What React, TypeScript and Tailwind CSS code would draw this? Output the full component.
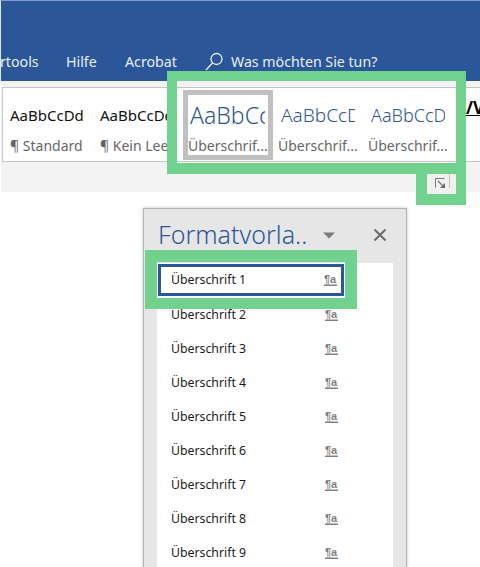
const SANS = "font-['Noto_Sans','Open_Sans',sans-serif]";

function Sample({ text, label, color, size, w, clip, selected }: { text: string; label: string; color: string; size: string; w: string; clip: string; selected?: boolean }) {
  return (
    <div className={`${w} shrink-0 h-[70px] flex flex-col overflow-hidden border-[5px] ${selected ? 'border-[#c0c0c0]' : 'border-transparent'}`}>
      <div className={`h-[41px] mb-[1px] flex items-center whitespace-nowrap overflow-hidden ${clip} ${color} ${size}`}>{text}</div>
      <div className="text-[14px] leading-[18px] text-[#666666] whitespace-nowrap overflow-hidden">{label}</div>
    </div>
  );
}

function Para() {
  return (
    <svg width="14" height="14" viewBox="0 0 14 14" className="shrink-0">
      <text x="0" y="10" fontSize="11" fontWeight="700" fill="#808080" fontFamily="'Liberation Sans', sans-serif">¶a</text>
      <rect x="0" y="11.5" width="13" height="1.5" fill="#808080" />
    </svg>
  );
}

function Row({ n, first }: { n: number; first?: boolean }) {
  return (
    <div className={`shrink-0 flex items-center justify-between text-[12.3px] text-[#1a1a1a] ${first ? 'h-[32px] mb-[2px] border-[3px] border-[#2b579a] pl-[10px] pr-[3px] ml-[1px] mr-[49px]' : 'h-[34px] pl-[14px] pr-[54px]'}`}>
      <span>Überschrift {n}</span>
      <Para />
    </div>
  );
}

export default function App() {
  return (
    <div className={`relative w-[480px] h-[567px] overflow-hidden bg-white ${SANS}`}>
      <div className="h-[81px] bg-[#2b579a] border-t border-l border-t-[#7f9bc4] border-l-[#dfe5ef] flex items-end pb-[9px] text-[14.2px] text-[#e8edf5] leading-[20px] whitespace-nowrap overflow-hidden">
        <span className="-ml-[1px] w-[66px] shrink-0">rtools</span>
        <span className="w-[59px] shrink-0">Hilfe</span>
        <span className="w-[80px] shrink-0">Acrobat</span>
        <svg width="18" height="20" viewBox="0 0 18 20" fill="none" stroke="#e8edf5" strokeWidth="1.3" className="mr-[8px] shrink-0">
          <circle cx="11.5" cy="7" r="5.5" />
          <path d="M7.5 11 L1 18" />
        </svg>
        <span>Was möchten Sie tun?</span>
      </div>
      <div className="h-[111px] bg-[#f3f3f3] pt-[6px] pl-[1px] border-l border-[#ffffff]">
        <div className="w-[478px] h-[75px] bg-white border border-[#c6c6c6] border-r-0 flex items-center pl-[2px] overflow-hidden">
          <Sample w="w-[90px]" clip="w-[80px]" text="AaBbCcDd" label="¶ Standard" color="text-[#111111]" size="text-[15px]" />
          <Sample w="w-[88px]" clip="w-[78px]" text="AaBbCcDd" label="¶ Kein Lee" color="text-[#111111]" size="text-[15px]" />
          <Sample w="w-[90px]" clip="w-[77px] pl-[2px]" selected text="AaBbCcDd" label="Überschrif..." color="text-[#2f5496]" size="text-[23px] font-light" />
          <Sample w="w-[90px]" clip="w-[77px] pl-[3px]" text="AaBbCcDd" label="Überschrif..." color="text-[#2f5496]" size="text-[19px] font-light" />
          <Sample w="w-[90px]" clip="w-[77px] pl-[3px]" text="AaBbCcDdEe" label="Überschrif..." color="text-[#2f5496]" size="text-[18px] font-light" />
          <span className="ml-[13px] -mt-[34px] text-[17px] font-bold text-black underline shrink-0 leading-none">/V</span>
        </div>
      </div>
      <div className="mt-[16px] ml-[143px] w-[264px] h-[400px] bg-[#e6e6e6] border border-[#b5b5b5] shadow-[0_0_3px_rgba(0,0,0,0.25)]">
        <div className="h-[54px] flex items-center pl-[14px] pb-[2px]">
          <span className="text-[25px] font-light text-[#2b579a] whitespace-nowrap">Formatvorla..</span>
          <svg width="12" height="7" viewBox="0 0 12 7" className="ml-[16px] shrink-0"><path d="M0 0.5 H12 L6 6.5 Z" fill="#7a7a7a" /></svg>
          <svg width="12" height="12" viewBox="0 0 12 12" className="ml-[39px] shrink-0" stroke="#6a6a6a" strokeWidth="2"><path d="M0.5 0.5 L11.5 11.5 M11.5 0.5 L0.5 11.5" /></svg>
        </div>
        <div className="mx-[13px] bg-white w-[236px] h-[345px] pt-[1px] flex flex-col">
          {[1, 2, 3, 4, 5, 6, 7, 8, 9].map((n) => <Row key={n} n={n} first={n === 1} />)}
        </div>
      </div>

      <div className="absolute left-[167px] top-[71px] w-[299px] h-[103px] border-[10px] border-b-[11px] border-[#71d28f]" />
      <div className="absolute left-[416px] top-[174px] w-[50px] h-[31px] border-r-[10px] border-l-[11px] border-b-[11px] border-[#71d28f] bg-[#f0f0f0] pl-[8px] pt-[4px] flex items-start">
        <svg width="11" height="11" viewBox="0 0 11 11" fill="none" stroke="#777777" className="shrink-0"><path d="M9.5 0.5 H0.5 V9.5" /><path d="M3 3 L9 9" strokeWidth="1.2" /><path d="M10 5 V10 H5 Z" fill="#666666" stroke="none" /></svg>
        <div className="ml-[3px] -mt-[4px] w-px h-[14px] bg-[#c6c6c6] shrink-0" />
      </div>
      <div className="absolute left-[145px] top-[250px] w-[212px] h-[59px] border-[12px] border-b-[11px] border-[#71d28f]" />
    </div>
  );
}
